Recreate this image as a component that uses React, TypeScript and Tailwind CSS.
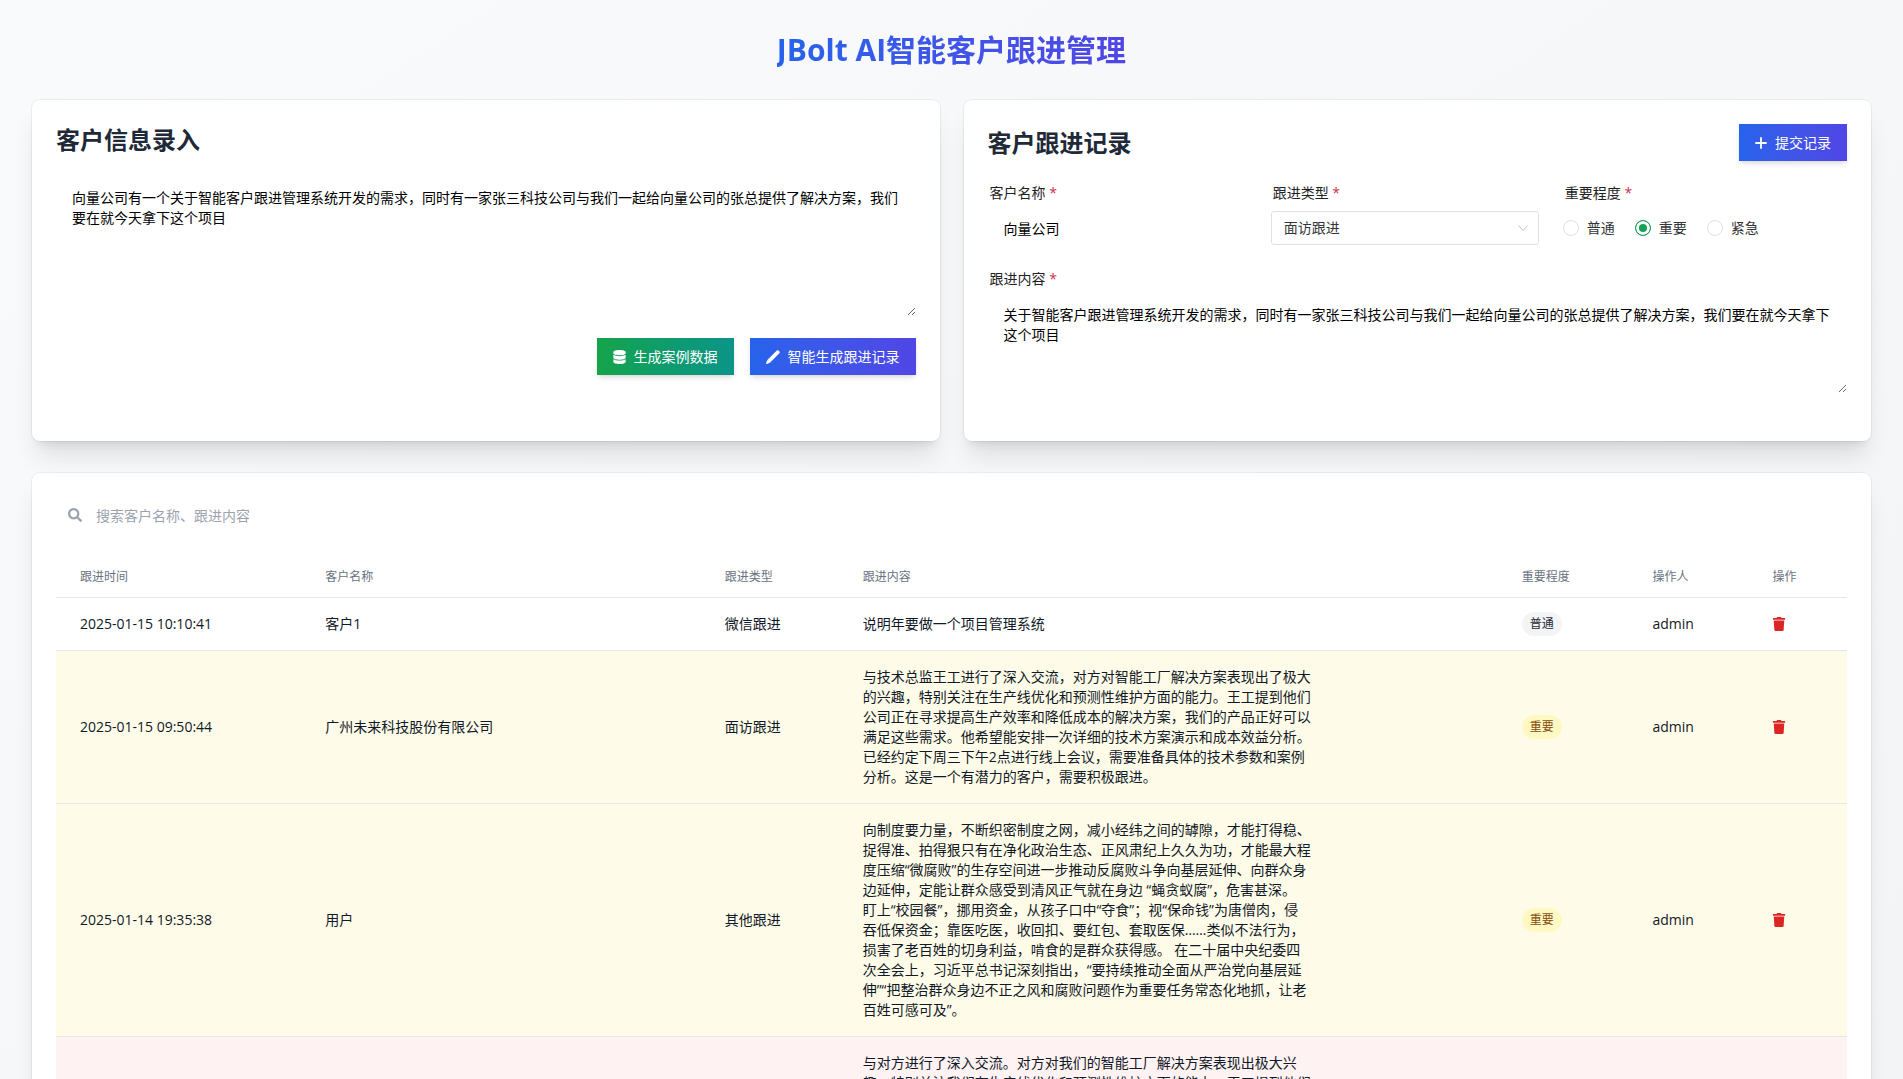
import { useState } from 'react';
import type { ReactNode } from 'react';
import { FaDatabase, FaSearch, FaTrash } from 'react-icons/fa';
import clsx from 'clsx';

type Level = '普通' | '重要' | '紧急';

interface FollowRecord {
  time: string;
  customer: string;
  type: string;
  content: string;
  level: Level;
  operator: string;
}

const FOLLOW_TYPES = ['面访跟进', '微信跟进', '电话跟进', '其他跟进'];
const LEVELS: Level[] = ['普通', '重要', '紧急'];

const RECORDS: FollowRecord[] = [
  {
    time: '2025-01-15 10:10:41',
    customer: '客户1',
    type: '微信跟进',
    content: '说明年要做一个项目管理系统',
    level: '普通',
    operator: 'admin',
  },
  {
    time: '2025-01-15 09:50:44',
    customer: '广州未来科技股份有限公司',
    type: '面访跟进',
    content:
      '与技术总监王工进行了深入交流，对方对智能工厂解决方案表现出了极大的兴趣，特别关注在生产线优化和预测性维护方面的能力。王工提到他们公司正在寻求提高生产效率和降低成本的解决方案，我们的产品正好可以满足这些需求。他希望能安排一次详细的技术方案演示和成本效益分析。已经约定下周三下午2点进行线上会议，需要准备具体的技术参数和案例分析。这是一个有潜力的客户，需要积极跟进。',
    level: '重要',
    operator: 'admin',
  },
  {
    time: '2025-01-14 19:35:38',
    customer: '用户',
    type: '其他跟进',
    content:
      '向制度要力量，不断织密制度之网，减小经纬之间的罅隙，才能打得稳、捉得准、拍得狠只有在净化政治生态、正风肃纪上久久为功，才能最大程度压缩“微腐败”的生存空间进一步推动反腐败斗争向基层延伸、向群众身边延伸，定能让群众感受到清风正气就在身边 “蝇贪蚁腐”，危害甚深。\n盯上“校园餐”，挪用资金，从孩子口中“夺食”；视“保命钱”为唐僧肉，侵吞低保资金；靠医吃医，收回扣、要红包、套取医保……类似不法行为，损害了老百姓的切身利益，啃食的是群众获得感。 在二十届中央纪委四次全会上，习近平总书记深刻指出，“要持续推动全面从严治党向基层延伸”“把整治群众身边不正之风和腐败问题作为重要任务常态化地抓，让老百姓可感可及”。',
    level: '重要',
    operator: 'admin',
  },
  {
    time: '2025-01-14 18:22:16',
    customer: '广州未来科技股份有限公司',
    type: '面访跟进',
    content:
      '与对方进行了深入交流。对方对我们的智能工厂解决方案表现出极大兴趣，特别关注我们在生产线优化和预测性维护方面的能力。王工提到他们公司正在寻求提高生产效率和降低成本的解决方案，我们的产品正好可以满足这些需求。他希望能安排一次详细的技术方案演示和成本效益分析。已经约定下周三下午2点进行线上会议，需要准备具体的技术参数和案例分析。这是一个有潜力的客户，需要积极跟进。',
    level: '紧急',
    operator: 'admin',
  },
];

const COLUMNS = [
  { title: '跟进时间', width: 'w-[13.7%]' },
  { title: '客户名称', width: 'w-[22.3%]' },
  { title: '跟进类型', width: 'w-[7.7%]' },
  { title: '跟进内容', width: 'w-[36.8%]' },
  { title: '重要程度', width: 'w-[7.3%]' },
  { title: '操作人', width: 'w-[6.7%]' },
  { title: '操作', width: 'w-[5.5%]' },
];

const rowColor: Record<Level, string> = {
  普通: 'bg-white',
  重要: 'bg-[#fefce8]',
  紧急: 'bg-[#fef2f2]',
};

const badgeColor: Record<Level, string> = {
  普通: 'bg-[#f3f4f6] text-[#1f2937]',
  重要: 'bg-[#fef9c3] text-[#854d0e]',
  紧急: 'bg-[#fee2e2] text-[#991b1b]',
};

function Card({ children, className }: { children: ReactNode; className?: string }) {
  return (
    <section
      className={clsx(
        'rounded-lg bg-white p-6 shadow-[0_0_0_1px_rgba(17,24,39,0.05),0_20px_25px_-5px_rgba(0,0,0,0.1),0_8px_10px_-6px_rgba(0,0,0,0.1)]',
        className,
      )}
    >
      {children}
    </section>
  );
}

function GradientButton({ icon, color = 'blue', children }: { icon: ReactNode; color?: 'blue' | 'green'; children: ReactNode }) {
  return (
    <button
      type="button"
      className={clsx(
        'flex h-[37px] items-center gap-2 bg-linear-to-r px-4 text-sm text-white shadow-md',
        color === 'blue' ? 'from-[#2563eb] to-[#4f46e5]' : 'from-[#16a34a] to-[#0d9488]',
      )}
    >
      {icon}
      {children}
    </button>
  );
}

function FieldLabel({ htmlFor, children }: { htmlFor?: string; children: ReactNode }) {
  return (
    <label htmlFor={htmlFor} className="block h-7 pl-0.5 text-sm text-[#1f2225]">
      {children} <span className="text-[#d03050]">*</span>
    </label>
  );
}

function PenIcon() {
  return (
    <svg width="14" height="14" viewBox="0 0 14 14" fill="currentColor" aria-hidden="true">
      <path d="M10.800.6a1.900 1.900 0 0 1 2.600 2.600L4.200 12.400 1 13.900a.7.7 0 0 1-.9-.9L1.600 9.800z" />
    </svg>
  );
}

function PlusIcon() {
  return (
    <svg width="12" height="12" viewBox="0 0 12 12" fill="none" stroke="currentColor" strokeWidth="1.8" strokeLinecap="round" aria-hidden="true">
      <path d="M6 1v10M1 6h10" />
    </svg>
  );
}

export default function App() {
  const [source, setSource] = useState(
    '向量公司有一个关于智能客户跟进管理系统开发的需求，同时有一家张三科技公司与我们一起给向量公司的张总提供了解决方案，我们要在就今天拿下这个项目',
  );
  const [customer, setCustomer] = useState('向量公司');
  const [followType, setFollowType] = useState('面访跟进');
  const [level, setLevel] = useState<Level>('重要');
  const [content, setContent] = useState(
    '关于智能客户跟进管理系统开发的需求，同时有一家张三科技公司与我们一起给向量公司的张总提供了解决方案，我们要在就今天拿下这个项目',
  );
  const [keyword, setKeyword] = useState('');

  const records = RECORDS.filter((r) => r.customer.includes(keyword) || r.content.includes(keyword));

  return (
    <div className="min-h-screen bg-linear-to-br from-[#f9fafb] to-[#f3f4f6] p-8 font-['Open_Sans','Noto_Sans_CJK_SC',sans-serif]">
      <h1 className="mb-8 text-center text-3xl font-bold">
        <span className="bg-linear-to-r from-[#2563eb] to-[#4f46e5] bg-clip-text text-transparent">
          JBolt AI智能客户跟进管理
        </span>
      </h1>

      <div className="mb-8 grid grid-cols-2 gap-6">
        <Card>
          <h2 className="mb-4 text-2xl font-bold text-[#1f2937]">客户信息录入</h2>
          <textarea
            aria-label="客户信息"
            value={source}
            onChange={(e) => setSource(e.target.value)}
            className="mb-[22px] block h-36 w-full resize p-4 text-sm text-black outline-none"
          />
          <div className="flex justify-end gap-4">
            <GradientButton color="green" icon={<FaDatabase className="h-[14px] w-[13px]" />}>
              生成案例数据
            </GradientButton>
            <GradientButton icon={<PenIcon />}>智能生成跟进记录</GradientButton>
          </div>
        </Card>

        <Card>
          <div className="mb-[22px] flex items-center justify-between">
            <h2 className="text-2xl font-bold text-[#1f2937]">客户跟进记录</h2>
            <GradientButton icon={<PlusIcon />}>提交记录</GradientButton>
          </div>

          <div className="mb-6 grid grid-cols-[259fr_268fr_284fr] gap-6">
            <div>
              <FieldLabel htmlFor="customer">客户名称</FieldLabel>
              <input
                id="customer"
                value={customer}
                onChange={(e) => setCustomer(e.target.value)}
                className="h-[34px] w-full px-4 text-sm text-black outline-none"
              />
            </div>
            <div>
              <FieldLabel htmlFor="follow-type">跟进类型</FieldLabel>
              <div className="relative">
                <select
                  id="follow-type"
                  value={followType}
                  onChange={(e) => setFollowType(e.target.value)}
                  className="h-[34px] w-full appearance-none rounded-[3px] border border-[#e0e0e6] bg-white px-3 text-sm text-[#333639] outline-none"
                >
                  {FOLLOW_TYPES.map((t) => (
                    <option key={t}>{t}</option>
                  ))}
                </select>
                <svg
                  className="pointer-events-none absolute top-[11px] right-[10px]"
                  width="12"
                  height="12"
                  viewBox="0 0 12 12"
                  fill="none"
                  stroke="#c2c2c2"
                  aria-hidden="true"
                >
                  <path d="M1.500 3.500 6 8.500 10.500 3.500" />
                </svg>
              </div>
            </div>
            <fieldset>
              <legend className="block h-7 pl-0.5 text-sm text-[#1f2225]">
                重要程度 <span className="text-[#d03050]">*</span>
              </legend>
              <div className="flex h-[34px] items-center gap-5">
                {LEVELS.map((item) => (
                  <label key={item} className="flex items-center gap-2 text-sm text-[#333639]">
                    <input
                      type="radio"
                      name="level"
                      checked={level === item}
                      onChange={() => setLevel(item)}
                      className="size-4 appearance-none rounded-full border border-[#e0e0e6] bg-white checked:border-[#18a058] checked:bg-[#18a058] checked:shadow-[inset_0_0_0_3px_#fff]"
                    />
                    {item}
                  </label>
                ))}
              </div>
            </fieldset>
          </div>

          <FieldLabel htmlFor="content">跟进内容</FieldLabel>
          <textarea
            id="content"
            value={content}
            onChange={(e) => setContent(e.target.value)}
            className="mb-6 block h-24 w-full resize px-4 py-2 text-sm text-black outline-none"
          />
        </Card>
      </div>

      <Card>
        <div className="relative mb-6">
          <FaSearch size={14} className="absolute top-[11px] left-3 text-[#9ca3af]" />
          <input
            type="text"
            aria-label="搜索"
            value={keyword}
            onChange={(e) => setKeyword(e.target.value)}
            placeholder="搜索客户名称、跟进内容"
            className="block h-9 w-full pr-4 pl-10 text-sm outline-none placeholder:text-[#9ca3af]"
          />
        </div>

        <table className="w-full table-fixed">
          <thead>
            <tr className="border-b border-[#e5e7eb]">
              {COLUMNS.map((col) => (
                <th
                  key={col.title}
                  className={clsx('px-6 py-3 text-left text-xs font-normal text-[#6b7280]', col.width)}
                >
                  {col.title}
                </th>
              ))}
            </tr>
          </thead>
          <tbody className="text-sm text-[#111827]">
            {records.map((record) => (
              <tr key={record.time} className={clsx('border-b border-[#e5e7eb]', rowColor[record.level])}>
                <td className="px-6 py-4 whitespace-nowrap">{record.time}</td>
                <td className="px-6 py-4">{record.customer}</td>
                <td className="px-6 py-4 whitespace-nowrap">{record.type}</td>
                <td className="px-6 py-4">
                  <div className="max-w-md whitespace-pre-line">{record.content}</div>
                </td>
                <td className="px-6 whitespace-nowrap">
                  <span className={clsx('inline-block rounded-full px-2 py-1 text-xs', badgeColor[record.level])}>
                    {record.level}
                  </span>
                </td>
                <td className="px-6 py-4">{record.operator}</td>
                <td className="px-6">
                  <button type="button" aria-label="删除" className="block text-[#dc2626]">
                    <FaTrash size={14} />
                  </button>
                </td>
              </tr>
            ))}
          </tbody>
        </table>
      </Card>
    </div>
  );
}
